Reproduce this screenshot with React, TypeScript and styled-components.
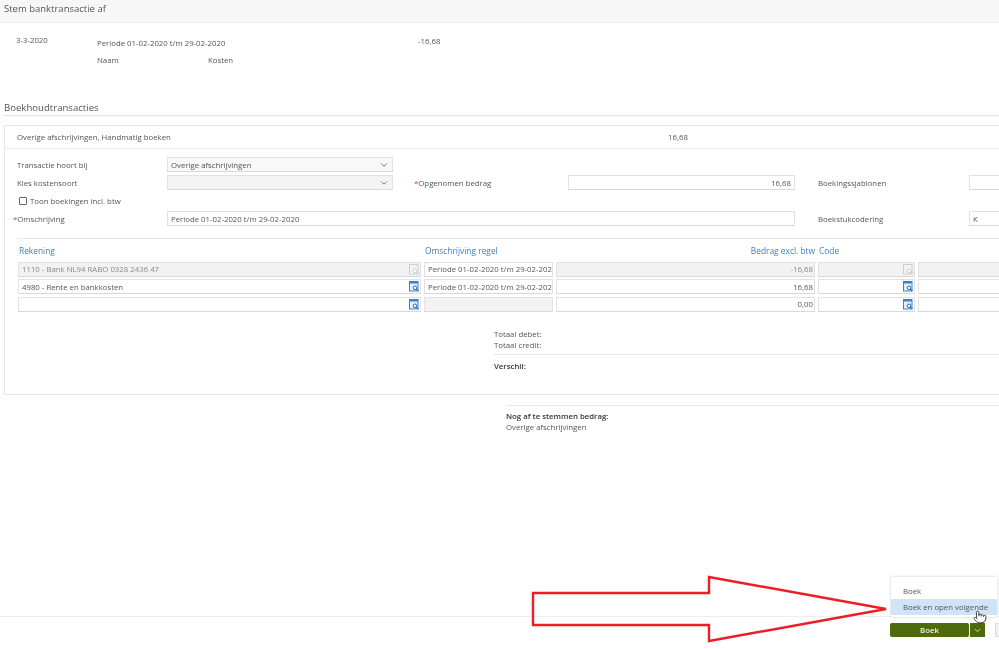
import styled, { createGlobalStyle } from "styled-components";
import { ChevronDown, Pointer } from "lucide-react";

const GlobalStyle = createGlobalStyle`
  html, body { margin: 0; padding: 0; background: #fff; }
  body { font-family: "Open Sans", "Liberation Sans", sans-serif; color: #555; }
`;

const LookupIcon = ({ disabled }: { disabled?: boolean }) => {
  const c = disabled ? "#cfcfcf" : "#3b82cc";
  return (
    <svg width="10" height="11" viewBox="0 0 10 11" fill="none">
      <rect x="0.5" y="0.5" width="8.5" height="9.5" fill={disabled ? "none" : "#e4eef9"} stroke={c} />
      {!disabled && <rect x="0.5" y="0.5" width="8.5" height="2" fill={c} />}
      <circle cx="6" cy="6.8" r="1.8" fill="#fff" stroke={disabled ? c : "#2d6cb0"} />
      <path d="M7.3 8.2 9.3 10.2" stroke={disabled ? c : "#2d6cb0"} strokeWidth="1.2" />
    </svg>
  );
};

const lines = [
  { account: "1110 - Bank NL94 RABO 0328 2436 47", text: "Periode 01-02-2020 t/m 29-02-2020", amount: "-16,68", locked: true },
  { account: "4980 - Rente en bankkosten", text: "Periode 01-02-2020 t/m 29-02-2020", amount: "16,68" },
  { account: "", text: "", amount: "0,00", noText: true },
];

export default function App() {
  return (
    <Page>
      <GlobalStyle />
      <Content>
        <TitleBar>Stem banktransactie af</TitleBar>

        <Summary>
          <DateText>3-3-2020</DateText>
          <SummaryDetails>
            <span>Periode 01-02-2020 t/m 29-02-2020</span>
            <NameRow>
              <NameLabel>Naam</NameLabel>
              <span>Kosten</span>
            </NameRow>
          </SummaryDetails>
          <span>-16,68</span>
        </Summary>

        <SectionTitle>Boekhoudtransacties</SectionTitle>

        <Panel>
          <PanelHead>
            <PanelHeadName>Overige afschrijvingen, Handmatig boeken</PanelHeadName>
            <span>16,68</span>
          </PanelHead>

          <FieldGrid>
            <Label>Transactie hoort bij</Label>
            <SelectBox>
              Overige afschrijvingen
              <ChevronDown size={10} strokeWidth={1.8} color="#444" />
            </SelectBox>
            <span />
            <span />
            <span />
            <span />
            <span />
            <span />

            <Label>Kies kostensoort</Label>
            <SelectBox $muted>
              <span />
              <ChevronDown size={10} strokeWidth={1.8} color="#444" />
            </SelectBox>
            <span />
            <Label><Req>*</Req>Opgenomen bedrag</Label>
            <Field $right defaultValue="16,68" />
            <span />
            <Label>Boekingssjablonen</Label>
            <Field />

            <CheckRow>
              <Check />
              Toon boekingen incl. btw
            </CheckRow>

            <ReqLabel><Req>*</Req>Omschrijving</ReqLabel>
            <WideField defaultValue="Periode 01-02-2020 t/m 29-02-2020" />
            <span />
            <Label>Boekstukcodering</Label>
            <Field defaultValue="K" />
          </FieldGrid>

          <Divider />

          <LinesGrid>
            <ColHead>Rekening</ColHead>
            <ColHead>Omschrijving regel</ColHead>
            <ColHead $right>Bedrag excl. btw</ColHead>
            <ColHead>Code</ColHead>
            <span />
            {lines.map((l, i) => (
              <LineRow key={i}>
                <Cell $locked={l.locked}>
                  {l.account}
                  <LookupIcon disabled={l.locked} />
                </Cell>
                <Cell $locked={l.noText}>{l.text}</Cell>
                <Cell $locked={l.locked} $right>{l.amount}</Cell>
                <Cell $locked={l.locked}>
                  <span />
                  <LookupIcon disabled={l.locked} />
                </Cell>
                <Cell $locked={l.locked} />
              </LineRow>
            ))}
          </LinesGrid>

          <Totals>
            <TotalLine>Totaal debet:</TotalLine>
            <TotalLine>Totaal credit:</TotalLine>
            <TotalRule />
            <StrongLine>Verschil:</StrongLine>
          </Totals>
        </Panel>

        <Remaining>
          <StrongLine>Nog af te stemmen bedrag:</StrongLine>
          <TotalLine>Overige afschrijvingen</TotalLine>
        </Remaining>

        <Footer>
          <MenuAnchor>
            <Menu>
              <MenuItem>Boek</MenuItem>
              <MenuItem $active>Boek en open volgende</MenuItem>
            </Menu>
          </MenuAnchor>
          <PrimaryButton>Boek</PrimaryButton>
          <CaretButton>
            <ChevronDown size={9} strokeWidth={2} color="#fff" />
          </CaretButton>
          <GhostButton />
        </Footer>
      </Content>

      <Cursor>
        <Pointer size={14} strokeWidth={1.5} color="#333" fill="#fff" />
      </Cursor>

      <ArrowOverlay width="999" height="649" viewBox="0 0 999 649" fill="#fff" fillOpacity="0">
        <polygon
          points="533,593 709,593 709,577 886,609 709,641 709,625 533,625"
          stroke="#ee1c25"
          strokeWidth="2.4"
        />
      </ArrowOverlay>
    </Page>
  );
}

const Page = styled.div`
  position: relative;
  width: 999px;
  height: 649px;
  overflow: hidden;
  font-size: 7.8px;
  line-height: 12px;
`;

const Content = styled.div`
  display: flex;
  flex-direction: column;
  height: 100%;
  filter: blur(0.4px);
`;

const TitleBar = styled.div`
  height: 23px;
  flex: none;
  box-sizing: border-box;
  padding: 3px 0 0 4px;
  background: #f7f7f7;
  border-bottom: 1px solid #eee;
  font-size: 9.5px;
`;

const Summary = styled.div`
  display: flex;
  align-items: flex-start;
  padding: 12px 0 0 16px;
  height: 65px;
  flex: none;
  box-sizing: border-box;
`;

const DateText = styled.span`
  width: 81px;
  margin-top: -1px;
`;

const SummaryDetails = styled.div`
  display: flex;
  flex-direction: column;
  gap: 5px;
  padding-top: 2px;
  width: 321px;
`;

const NameRow = styled.div`
  display: flex;
`;

const NameLabel = styled.span`
  width: 111px;
`;

const SectionTitle = styled.div`
  margin: 13px 0 0 4px;
  height: 13px;
  padding-bottom: 1px;
  border-bottom: 1px solid #e4e4e4;
  font-size: 9.6px;
  line-height: 14px;
`;

const Panel = styled.div`
  margin: 9px 0 0 4px;
  width: 1040px;
  height: 270px;
  flex: none;
  box-sizing: border-box;
  border: 1px solid #e6e6e6;
`;

const PanelHead = styled.div`
  display: flex;
  align-items: center;
  height: 23px;
  box-sizing: border-box;
  padding-left: 12px;
  border-bottom: 1px solid #e8e8e8;
`;

const PanelHeadName = styled.span`
  width: 651px;
`;

const FieldGrid = styled.div`
  display: grid;
  grid-template-columns: 150px 226px 21px 154px 227px 23px 151px 60px;
  grid-template-rows: 15px 15px 15px 15px;
  row-gap: 3px;
  align-items: center;
  padding: 8px 0 0 12px;
`;

const Label = styled.label`
  white-space: nowrap;
`;

const ReqLabel = styled(Label)`
  margin-left: -4px;
`;

const Req = styled.span`
  color: #d9363e;
`;

const fieldBox = `
  box-sizing: border-box;
  height: 15px;
  border: 1px solid #e2e2e2;
  border-bottom-color: #d8d8d8;
  font: inherit;
  color: #555;
  padding: 0 3px;
  min-width: 0;
  width: 100%;
  outline: none;
`;

const Field = styled.input<{ $right?: boolean }>`
  ${fieldBox}
  text-align: ${({ $right }) => ($right ? "right" : "left")};
`;

const WideField = styled(Field)`
  grid-column: 2 / span 4;
`;

const SelectBox = styled.div<{ $muted?: boolean }>`
  ${fieldBox}
  display: flex;
  align-items: center;
  justify-content: space-between;
  padding-right: 3px;
  background: ${({ $muted }) => ($muted ? "#f4f4f4" : "#f8f8f8")};
`;

const CheckRow = styled.div`
  grid-column: 1 / -1;
  display: flex;
  align-items: center;
  gap: 3px;
  padding-left: 2px;
`;

const Check = styled.span`
  box-sizing: border-box;
  width: 8px;
  height: 8px;
  border: 1px solid #666;
  border-radius: 1px;
`;

const Divider = styled.div`
  height: 1px;
  background: #e8e8e8;
  margin: 12px 0 0 12px;
`;

const LinesGrid = styled.div`
  display: grid;
  grid-template-columns: 403px 129px 259px 97px 110px;
  column-gap: 3px;
  row-gap: 2.5px;
  padding: 6px 0 0 13px;
`;

const ColHead = styled.div<{ $right?: boolean }>`
  height: 14px;
  padding-left: 1px;
  font-size: 8.4px;
  color: #3f7fbf;
  white-space: nowrap;
  text-align: ${({ $right }) => ($right ? "right" : "left")};
`;

const LineRow = styled.div`
  display: contents;
`;

const Cell = styled.div<{ $locked?: boolean; $right?: boolean }>`
  ${fieldBox}
  display: flex;
  align-items: center;
  overflow: hidden;
  white-space: nowrap;
  padding-right: 1px;
  justify-content: ${({ $right }) => ($right ? "flex-end" : "space-between")};
  background: ${({ $locked }) => ($locked ? "#f2f2f2" : "#fff")};
  color: ${({ $locked }) => ($locked ? "#888" : "#555")};
  svg { flex: none; margin-left: auto; }
`;

const Totals = styled.div`
  margin: 17px 0 0 489px;
  display: flex;
  flex-direction: column;
`;

const TotalLine = styled.div`
  height: 11px;
  line-height: 11px;
`;

const TotalRule = styled.div`
  height: 1px;
  background: #e8e8e8;
  margin: 3px 0 6px;
`;

const StrongLine = styled.div`
  height: 11px;
  line-height: 11px;
  font-weight: 600;
  color: #333;
`;

const Remaining = styled.div`
  margin: 10px 0 0 506px;
  padding-top: 5px;
  border-top: 1px solid #e8e8e8;
  display: flex;
  flex-direction: column;
`;

const Footer = styled.div`
  position: relative;
  margin-top: auto;
  height: 33px;
  flex: none;
  box-sizing: border-box;
  border-top: 1px solid #eee;
  display: flex;
  align-items: flex-start;
  padding: 6px 0 0 890px;
  gap: 1px;
`;

const MenuAnchor = styled.div`
  position: absolute;
  left: 891px;
  bottom: 32px;
`;

const Menu = styled.div`
  width: 106px;
  box-sizing: border-box;
  padding: 6px 0 2px;
  background: #fff;
  box-shadow: 0 0 3px rgba(0, 0, 0, 0.22);
  border-radius: 2px;
`;

const MenuItem = styled.div<{ $active?: boolean }>`
  height: 16px;
  line-height: 16px;
  padding-left: 12px;
  white-space: nowrap;
  background: ${({ $active }) => ($active ? "#cfe4f8" : "transparent")};
`;

const PrimaryButton = styled.button`
  flex: none;
  width: 79px;
  height: 14px;
  padding: 0;
  border: 0;
  border-radius: 2px;
  background: #4f6a0a;
  color: #eef2e2;
  font: inherit;
  font-weight: 600;
`;

const CaretButton = styled.button`
  flex: none;
  width: 15px;
  height: 14px;
  padding: 0;
  border: 0;
  background: #4f6a0a;
  display: flex;
  align-items: center;
  justify-content: center;
`;

const GhostButton = styled.div`
  flex: none;
  margin-left: 9px;
  width: 10px;
  height: 14px;
  background: #f1f1f1;
  border: 1px solid #ddd;
  box-sizing: border-box;
`;

const Cursor = styled.div`
  position: absolute;
  left: 973px;
  top: 610px;
`;

const ArrowOverlay = styled.svg`
  position: absolute;
  inset: 0;
  pointer-events: none;
`;
